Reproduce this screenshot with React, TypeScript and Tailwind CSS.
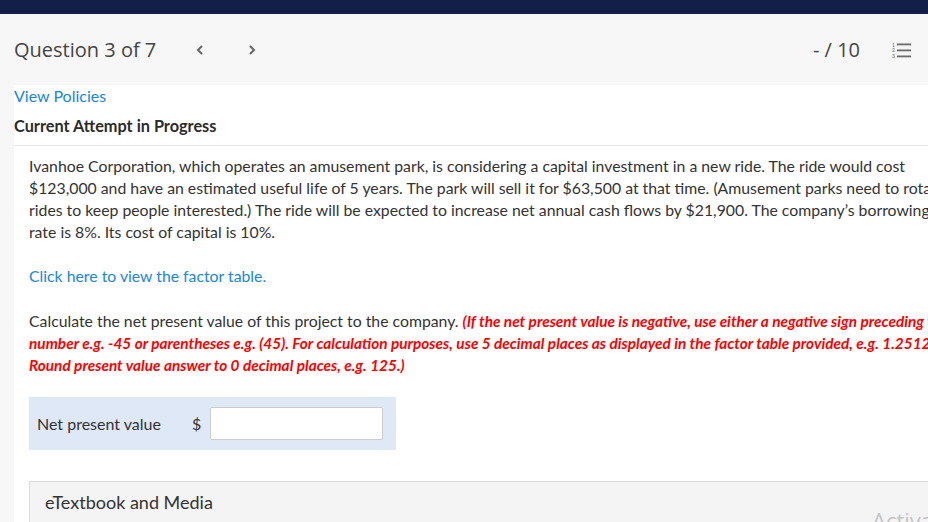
import React from "react";

const lato = { fontFamily: "Lato, 'Open Sans', sans-serif" } as const;
const open = { fontFamily: "'Open Sans', 'Noto Sans', sans-serif" } as const;

export default function App() {
  return (
    <div className="relative w-[928px] h-[522px] overflow-hidden bg-[#f7f7f7]" style={lato}>
      <div className="h-[14px] bg-[#141f47]" />
      <div className="h-[71px] flex items-center pl-[14px] pr-[16px] text-[#444]" style={open}>
        <span className="text-[20px] leading-none">Question 3 of 7</span>
        <svg className="ml-[40px]" width="8" height="10" viewBox="0 0 8 10">
          <path d="M6 1 L2 5 L6 9" fill="none" stroke="#666" strokeWidth="2" />
        </svg>
        <svg className="ml-[44px]" width="8" height="10" viewBox="0 0 8 10">
          <path d="M2 1 L6 5 L2 9" fill="none" stroke="#666" strokeWidth="2" />
        </svg>
        <span className="ml-auto text-[20px] leading-none">- / 10</span>
        <svg className="ml-[32px]" width="20" height="16" viewBox="0 0 20 16">
          <text x="0" y="4.5" fontSize="5" fill="#666" fontFamily="Lato, sans-serif">1</text>
          <text x="0" y="10" fontSize="5" fill="#666" fontFamily="Lato, sans-serif">2</text>
          <text x="0" y="15.5" fontSize="5" fill="#666" fontFamily="Lato, sans-serif">3</text>
          <rect x="5" y="1.5" width="14" height="1.8" fill="#6b6b6b" />
          <rect x="5" y="7.5" width="14" height="1.8" fill="#6b6b6b" />
          <rect x="5" y="13.5" width="14" height="1.8" fill="#6b6b6b" />
        </svg>
      </div>
      <div className="ml-[14px] bg-white h-[437px] text-[#333]">
        <div className="text-[16px] leading-[22px] text-[#1a86de]">View Policies</div>
        <div className="mt-[8px] text-[16.3px] leading-[22px] font-bold text-[#2b2b2b]">Current Attempt in Progress</div>
        <div className="mt-[8px] border-t border-[#e8e8e8] pt-[9px] pl-[15px]">
          <p className="w-[922px] text-[15.8px] leading-[22px]">
            Ivanhoe Corporation, which operates an amusement park, is considering a capital investment in a new ride. The ride would cost $123,000 and have an estimated useful life of 5 years. The park will sell it for $63,500 at that time. (Amusement parks need to rotate rides to keep people interested.) The ride will be expected to increase net annual cash flows by $21,900. The company’s borrowing rate is 8%. Its cost of capital is 10%.
          </p>
          <p className="mt-[22px] text-[15.8px] leading-[22px] text-[#1a86de]">Click here to view the factor table.</p>
          <p className="mt-[23px] w-[922px] text-[15.8px] leading-[22px]">
            Calculate the net present value of this project to the company.{" "}
            <span className="font-bold italic text-[15.4px] text-[#ff0000]">
              (If the net present value is negative, use either a negative sign preceding the number e.g. -45 or parentheses e.g. (45). For calculation purposes, use 5 decimal places as displayed in the factor table provided, e.g. 1.25124. Round present value answer to 0 decimal places, e.g. 125.)
            </span>
          </p>
          <div className="mt-[21px] w-[367px] h-[53px] bg-[#dee8f7] flex items-center pl-[8px]">
            <span className="text-[16px] w-[155px]">Net present value</span>
            <span className="text-[16px] w-[18px]">$</span>
            <div className="w-[173px] h-[33px] bg-white border border-[#cccccc] rounded-[2px]" />
          </div>
          <div className="mt-[31px] h-[60px] bg-[#f4f4f4] border-t border-l border-[#dcdcdc] pl-[15px] pt-[8px]">
            <span className="text-[18px] leading-[24px] text-[#333]">eTextbook and Media</span>
          </div>
        </div>
      </div>
      <div className="absolute left-[872px] top-[504px] text-[22px] text-[#c4c4c4]" style={open}>Activate Windows</div>
    </div>
  );
}
